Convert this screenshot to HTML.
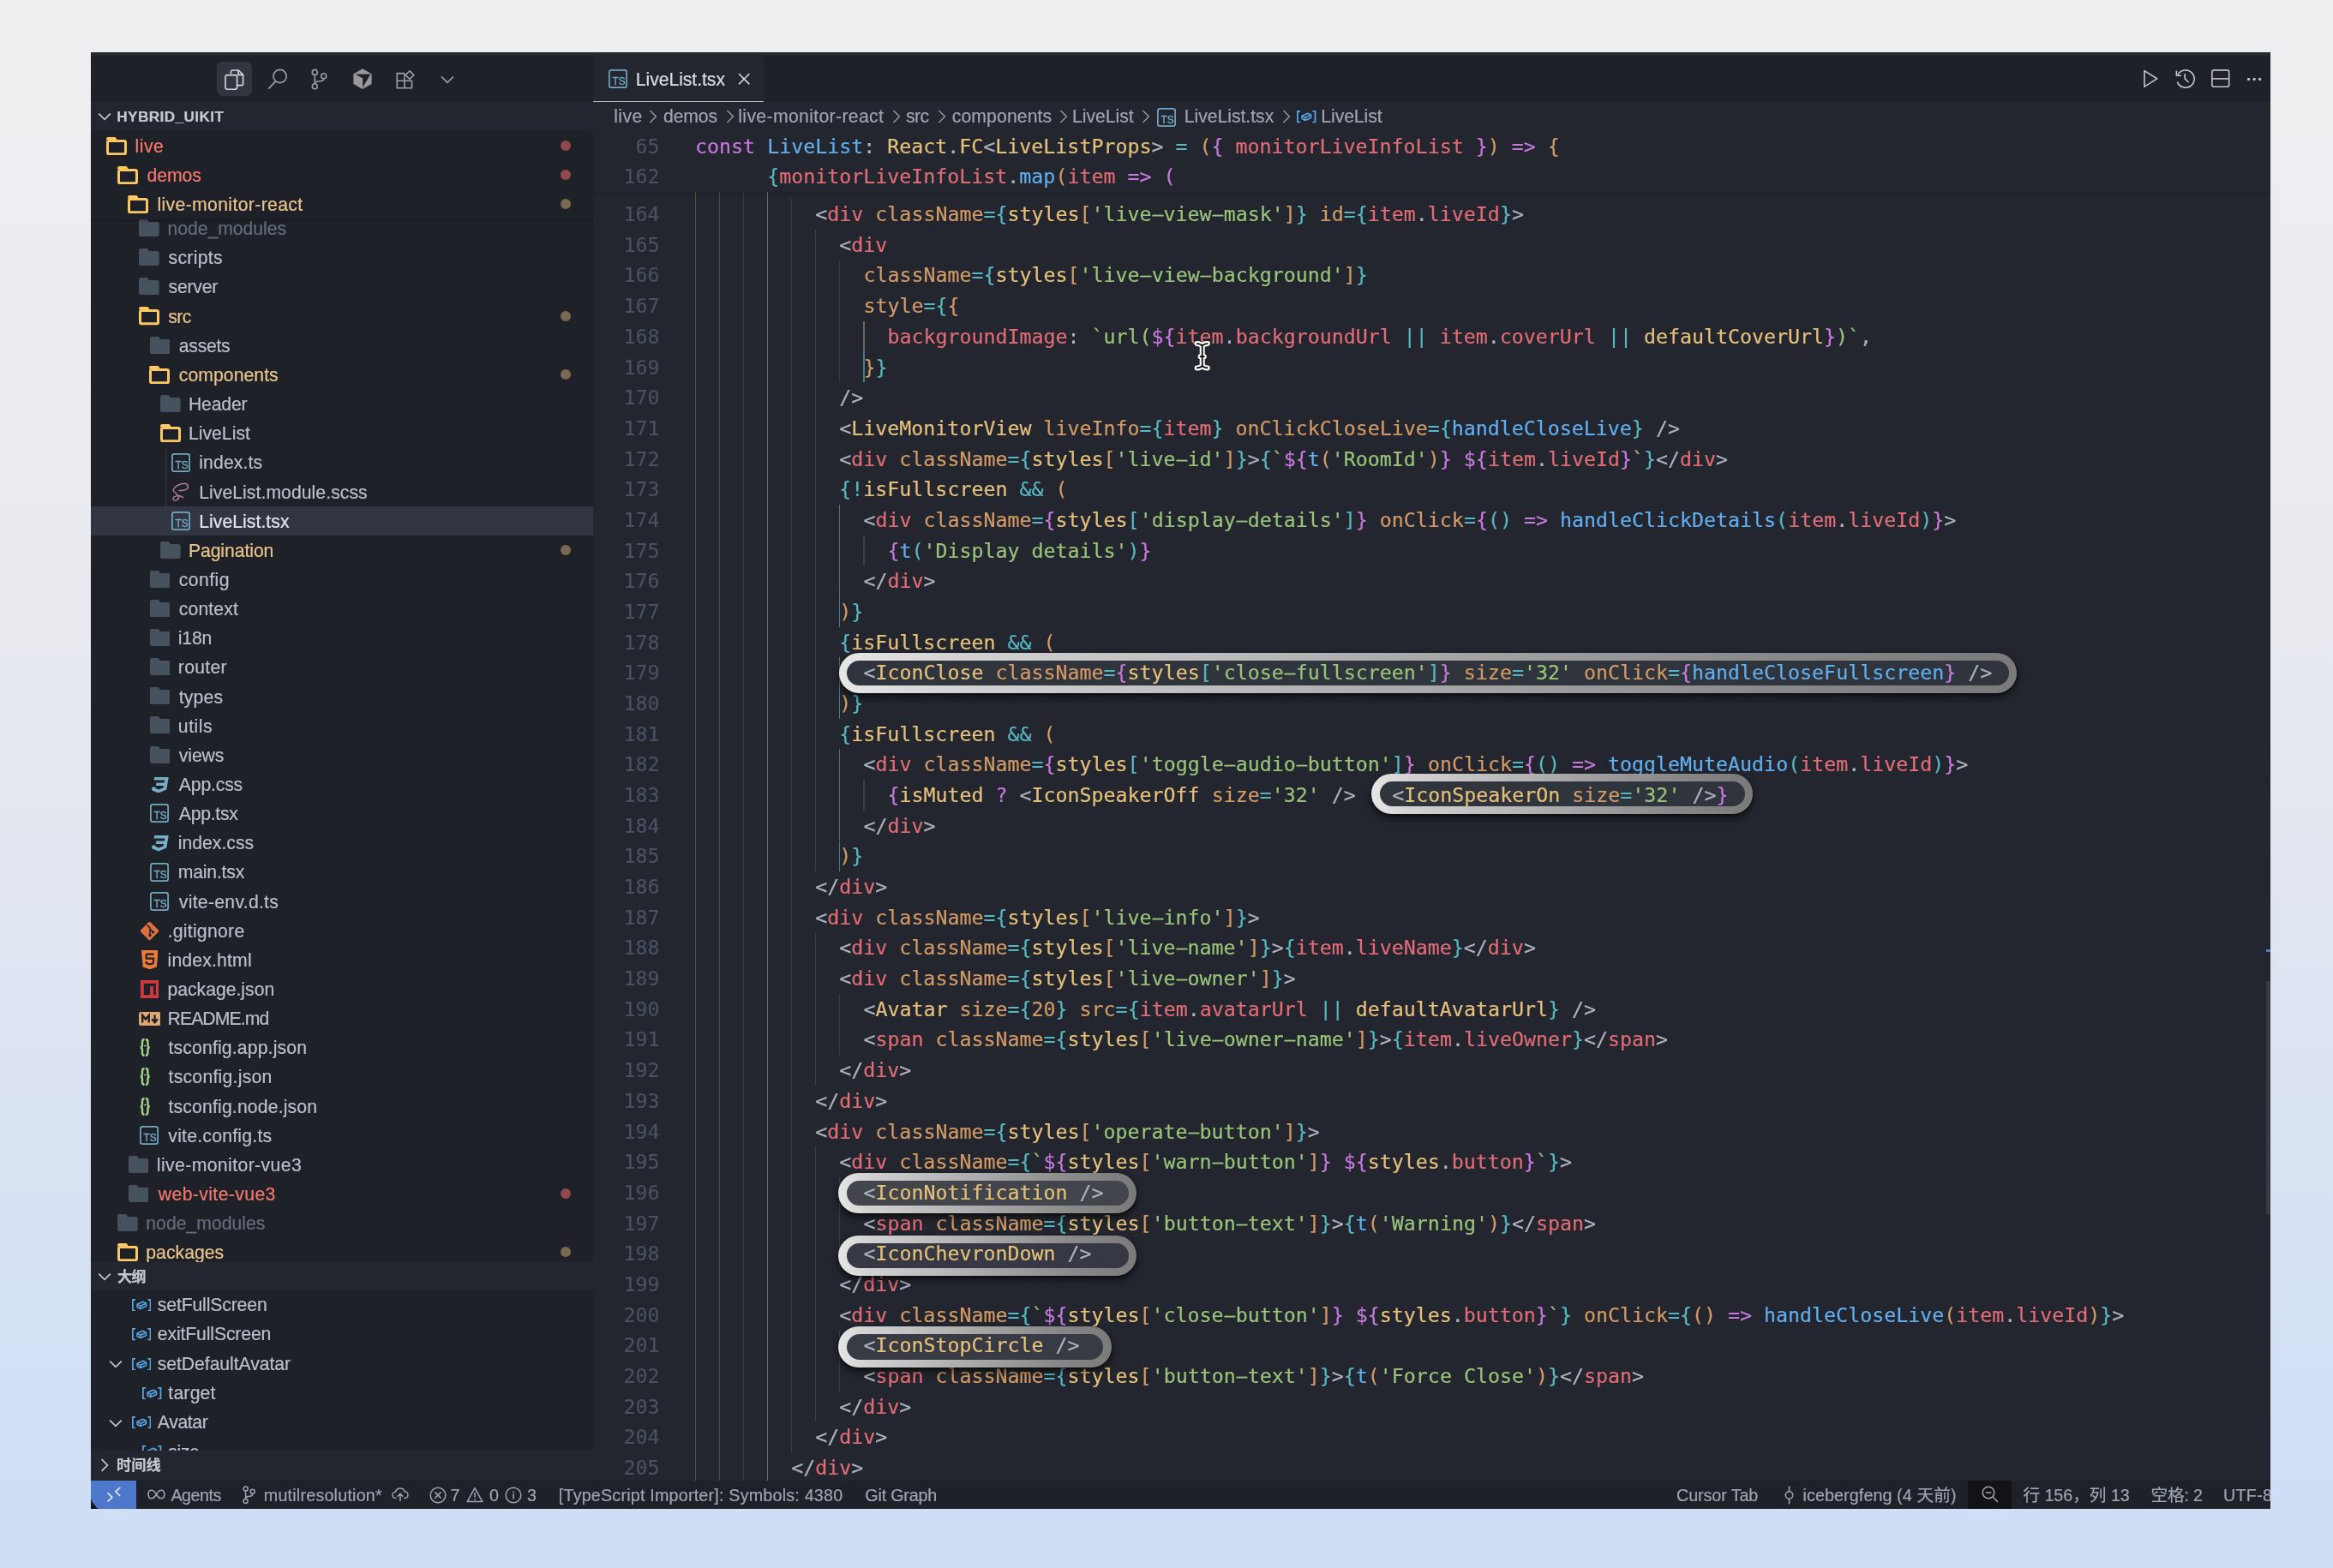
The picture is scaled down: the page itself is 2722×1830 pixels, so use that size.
<!DOCTYPE html>
<html lang="zh"><head><meta charset="utf-8"><title>LiveList.tsx</title>
<style>
html,body{margin:0;padding:0}
body{width:2722px;height:1830px;overflow:hidden;position:relative;
 background:linear-gradient(180deg,#edeef0 0%,#ebecef 30%,#e3e7f0 52%,#d9e2f2 72%,#d1dff5 90%,#cfdef5 100%);
 font-family:"Liberation Sans","Noto Sans CJK SC",sans-serif;}
#win{position:absolute;left:0;top:0;width:2722px;height:1830px;
 clip-path:inset(61.4px 73px 69.3px 106px);will-change:transform;}
#win div,#win span,#win svg{position:absolute}
.abs{position:absolute}
.ui{-webkit-text-stroke:.22px;font-size:21.2px;line-height:34px;height:34px;white-space:nowrap;color:#c3c8d2}
.code{-webkit-text-stroke:.2px;font-family:"DejaVu Sans Mono","Liberation Mono",monospace;font-size:23.287px;line-height:35.68px;height:35.68px;white-space:pre;color:#abb2bf}
#win .code span{position:static}
#win .code span.h{display:inline-block;transform:scale(2.1,.72)}
.ln{-webkit-text-stroke:.2px;font-family:"DejaVu Sans Mono","Liberation Mono",monospace;font-size:23.287px;line-height:35.68px;height:35.68px;width:70px;text-align:right;color:#495162;white-space:pre}
.p{color:#c678dd}.r{color:#e06c75}.g{color:#98c379}.y{color:#e5c07b}.b{color:#61afef}.c{color:#56b6c2}.o{color:#d19a66}.f{color:#abb2bf}
.st{-webkit-text-stroke:.2px;font-size:19.7px;line-height:33px;height:33px;top:1728.5px;white-space:nowrap;color:#9da5b4}
.bc{-webkit-text-stroke:.2px;font-size:21.2px;line-height:34px;height:34px;top:118.7px;white-space:nowrap;color:#9da5b4}
.gd{width:1.5px}
.pill{border-radius:24px;background:linear-gradient(90deg,#e6e6e6 0%,#d2d2d2 10%,#bcbcbc 32%,#a2a2a2 55%,#888 80%,#7a7a7a 100%);box-shadow:0 5px 9px rgba(0,0,0,.55),0 1px 3px rgba(0,0,0,.5)}
.pill i{position:absolute;left:9.3px;top:8.8px;right:9.3px;bottom:8.8px;border-radius:15px;background:#30343d;display:block}
</style></head><body>
<div id="win">
<div style="left:106.0px;top:61.4px;width:2543.0px;height:1700.3px;background:#1e2127;"></div><div style="left:692.0px;top:119.0px;width:1957.0px;height:1608.6px;background:#23262e;"></div><div style="left:106.0px;top:61.4px;width:2543.0px;height:3.2px;background:#24282f;"></div><div style="left:692.0px;top:64.6px;width:199.0px;height:54.4px;background:#23262e;"></div><div style="left:692.0px;top:118.3px;width:199.0px;height:1.0px;background:#b9bcc2;"></div><div style="left:253px;top:72.2px;width:41px;height:40.2px;border-radius:6.5px;background:#30353f"></div><svg style="left:262.0px;top:80.6px" width="23" height="24.4" viewBox="0 0 23 24.4" ><path d="M7.4 5.2V3.2Q7.4 1 9.6 1H16.2L21.6 6.2V16.4Q21.6 18.6 19.4 18.6H14.6M16 1.2V6.4H21.4" fill="none" stroke="#d7dae0" stroke-width="1.6" stroke-linejoin="round"/><rect x="1" y="6.6" width="13.6" height="16.6" rx="2.2" fill="none" stroke="#d7dae0" stroke-width="1.6"/></svg><svg style="left:311.6px;top:80.0px" width="24" height="25" viewBox="0 0 24 25" ><circle cx="14.6" cy="9" r="7.6" fill="none" stroke="#9b9ea4" stroke-width="1.6"/><path d="M9.6 14.8L1.2 23.6" stroke="#9b9ea4" stroke-width="1.7"/></svg><svg style="left:362.4px;top:80.0px" width="22" height="25.4" viewBox="0 0 22 25.4" ><circle cx="5.3" cy="4.4" r="3" fill="none" stroke="#9b9ea4" stroke-width="1.6"/><circle cx="5.3" cy="20.8" r="3" fill="none" stroke="#9b9ea4" stroke-width="1.6"/><circle cx="15.7" cy="8.8" r="3" fill="none" stroke="#9b9ea4" stroke-width="1.6"/><path d="M5.3 7.4V17.8M15.7 11.8Q15.7 14.6 11.6 14.8Q5.3 15 5.3 17.8" fill="none" stroke="#9b9ea4" stroke-width="1.6"/></svg><svg style="left:411.6px;top:80.2px" width="22" height="24.4" viewBox="0 0 22 24.4" ><path d="M11 0.3L21.6 6.3V18.1L11 24.1L0.4 18.1V6.3Z" fill="#9a9a9a"/><path d="M2.2 6.6H20.4L11 22.6L11 11.6Z" fill="#1e2127"/><path d="M2.2 6.6L11 11.6V22.4" fill="none" stroke="#9a9a9a" stroke-width=".4"/></svg><svg style="left:461.6px;top:81.6px" width="22.4" height="22" viewBox="0 0 22.4 22" ><path d="M10 3.6H1.2V20.8H18.6V12M1.2 12.2H18.6M10 3.6V20.8" fill="none" stroke="#9b9ea4" stroke-width="1.6"/><rect x="12.6" y="2.2" width="6.8" height="6.8" transform="rotate(45 16 5.6)" fill="none" stroke="#9b9ea4" stroke-width="1.6"/></svg><svg style="left:513.6px;top:88.4px" width="16" height="10" viewBox="0 0 16 10" ><path d="M1 1.4L8 8.4L15 1.4" fill="none" stroke="#9b9ea4" stroke-width="1.6"/></svg><div style="left:106.0px;top:591.0px;width:586.0px;height:34.3px;background:#313642;"></div><div style="left:192.6px;top:522.8px;width:1.4px;height:102.5px;background:#353b46;"></div><svg style="left:162.2px;top:255.9px" width="23.6" height="20" viewBox="0 0 23.6 20" ><path d="M0 2.2Q0 0 2.2 0H8.8Q10.2 0 10.9 1.3L11.7 3H21.4Q23.6 3 23.6 5.2V17.8Q23.6 20 21.4 20H2.2Q0 20 0 17.8Z" fill="#47525f"/></svg><div class="ui" style="left:195.5px;top:250.1px;letter-spacing:-0.037px;color:#636d7d">node_modules</div><svg style="left:162.2px;top:290.0px" width="23.6" height="20" viewBox="0 0 23.6 20" ><path d="M0 2.2Q0 0 2.2 0H8.8Q10.2 0 10.9 1.3L11.7 3H21.4Q23.6 3 23.6 5.2V17.8Q23.6 20 21.4 20H2.2Q0 20 0 17.8Z" fill="#47525f"/></svg><div class="ui" style="left:196.5px;top:284.3px;letter-spacing:0.313px;color:#b9bfcb">scripts</div><svg style="left:162.2px;top:324.2px" width="23.6" height="20" viewBox="0 0 23.6 20" ><path d="M0 2.2Q0 0 2.2 0H8.8Q10.2 0 10.9 1.3L11.7 3H21.4Q23.6 3 23.6 5.2V17.8Q23.6 20 21.4 20H2.2Q0 20 0 17.8Z" fill="#47525f"/></svg><div class="ui" style="left:196.5px;top:318.4px;letter-spacing:-0.202px;color:#b9bfcb">server</div><svg style="left:161.6px;top:358.2px" width="24" height="21.4" viewBox="0 0 24 21.4" ><path d="M0 2.2Q0 0 2.2 0H9.6Q11 0 11.7 1.4L12.6 3.4H0Z" fill="#fcc862"/><rect x="1.5" y="4.6" width="21" height="15.2" rx="1.6" fill="none" stroke="#fcc862" stroke-width="3"/></svg><div class="ui" style="left:196.2px;top:352.6px;letter-spacing:-0.525px;color:#e8c48c">src</div><div style="left:653.8px;top:362.7px;width:12px;height:12px;border-radius:50%;background:#7a6850"></div><svg style="left:174.7px;top:392.5px" width="23.6" height="20" viewBox="0 0 23.6 20" ><path d="M0 2.2Q0 0 2.2 0H8.8Q10.2 0 10.9 1.3L11.7 3H21.4Q23.6 3 23.6 5.2V17.8Q23.6 20 21.4 20H2.2Q0 20 0 17.8Z" fill="#47525f"/></svg><div class="ui" style="left:208.8px;top:386.7px;letter-spacing:-0.268px;color:#b9bfcb">assets</div><svg style="left:174.1px;top:426.5px" width="24" height="21.4" viewBox="0 0 24 21.4" ><path d="M0 2.2Q0 0 2.2 0H9.6Q11 0 11.7 1.4L12.6 3.4H0Z" fill="#fcc862"/><rect x="1.5" y="4.6" width="21" height="15.2" rx="1.6" fill="none" stroke="#fcc862" stroke-width="3"/></svg><div class="ui" style="left:208.8px;top:420.9px;letter-spacing:0.052px;color:#e8c48c">components</div><div style="left:653.8px;top:431.0px;width:12px;height:12px;border-radius:50%;background:#7a6850"></div><svg style="left:187.2px;top:460.8px" width="23.6" height="20" viewBox="0 0 23.6 20" ><path d="M0 2.2Q0 0 2.2 0H8.8Q10.2 0 10.9 1.3L11.7 3H21.4Q23.6 3 23.6 5.2V17.8Q23.6 20 21.4 20H2.2Q0 20 0 17.8Z" fill="#47525f"/></svg><div class="ui" style="left:219.9px;top:455.0px;letter-spacing:-0.147px;color:#b9bfcb">Header</div><svg style="left:186.6px;top:494.8px" width="24" height="21.4" viewBox="0 0 24 21.4" ><path d="M0 2.2Q0 0 2.2 0H9.6Q11 0 11.7 1.4L12.6 3.4H0Z" fill="#fcc862"/><rect x="1.5" y="4.6" width="21" height="15.2" rx="1.6" fill="none" stroke="#fcc862" stroke-width="3"/></svg><div class="ui" style="left:219.9px;top:489.2px;letter-spacing:0.021px;color:#b9bfcb">LiveList</div><svg style="left:200.2px;top:528.5px" width="22" height="22" viewBox="0 0 22 22" ><rect x="0.9" y="0.9" width="20.2" height="20.2" rx="2.4" fill="none" stroke="#74a9c4" stroke-width="1.7"/><text x="4.6" y="18.4" font-family="Liberation Sans,sans-serif" font-size="12.2" fill="#74a9c4" stroke="#74a9c4" stroke-width=".35" textLength="15.2" lengthAdjust="spacingAndGlyphs">TS</text></svg><div class="ui" style="left:232.2px;top:523.3px;letter-spacing:0.139px;color:#b9bfcb">index.ts</div><svg style="left:199.8px;top:563.3px" width="21" height="23" viewBox="0 0 21 23" ><path d="M19.3 4.2C18 -0.8 6.5 1.2 2.6 8C0.4 12.6 8 12.6 8.6 16.4C9.2 20.4 3 22.8 2 19.4C1.4 16.4 8.4 13.6 13.6 17.6M19.3 4.2C20.4 7.6 14.4 10.2 9 9.4" fill="none" stroke="#b47ba6" stroke-width="1.5" stroke-linecap="round"/></svg><div class="ui" style="left:232.2px;top:557.5px;letter-spacing:0.053px;color:#b9bfcb">LiveList.module.scss</div><svg style="left:200.2px;top:596.8px" width="22" height="22" viewBox="0 0 22 22" ><rect x="0.9" y="0.9" width="20.2" height="20.2" rx="2.4" fill="none" stroke="#74a9c4" stroke-width="1.7"/><text x="4.6" y="18.4" font-family="Liberation Sans,sans-serif" font-size="12.2" fill="#74a9c4" stroke="#74a9c4" stroke-width=".35" textLength="15.2" lengthAdjust="spacingAndGlyphs">TS</text></svg><div class="ui" style="left:232.2px;top:591.6px;letter-spacing:0.045px;color:#e3e6ec">LiveList.tsx</div><svg style="left:187.2px;top:631.5px" width="23.6" height="20" viewBox="0 0 23.6 20" ><path d="M0 2.2Q0 0 2.2 0H8.8Q10.2 0 10.9 1.3L11.7 3H21.4Q23.6 3 23.6 5.2V17.8Q23.6 20 21.4 20H2.2Q0 20 0 17.8Z" fill="#47525f"/></svg><div class="ui" style="left:219.9px;top:625.8px;letter-spacing:-0.072px;color:#e8c48c">Pagination</div><div style="left:653.8px;top:635.9px;width:12px;height:12px;border-radius:50%;background:#7a6850"></div><svg style="left:174.7px;top:665.7px" width="23.6" height="20" viewBox="0 0 23.6 20" ><path d="M0 2.2Q0 0 2.2 0H8.8Q10.2 0 10.9 1.3L11.7 3H21.4Q23.6 3 23.6 5.2V17.8Q23.6 20 21.4 20H2.2Q0 20 0 17.8Z" fill="#47525f"/></svg><div class="ui" style="left:208.8px;top:659.9px;letter-spacing:0.429px;color:#b9bfcb">config</div><svg style="left:174.7px;top:699.8px" width="23.6" height="20" viewBox="0 0 23.6 20" ><path d="M0 2.2Q0 0 2.2 0H8.8Q10.2 0 10.9 1.3L11.7 3H21.4Q23.6 3 23.6 5.2V17.8Q23.6 20 21.4 20H2.2Q0 20 0 17.8Z" fill="#47525f"/></svg><div class="ui" style="left:208.8px;top:694.1px;letter-spacing:0.129px;color:#b9bfcb">context</div><svg style="left:174.7px;top:734.0px" width="23.6" height="20" viewBox="0 0 23.6 20" ><path d="M0 2.2Q0 0 2.2 0H8.8Q10.2 0 10.9 1.3L11.7 3H21.4Q23.6 3 23.6 5.2V17.8Q23.6 20 21.4 20H2.2Q0 20 0 17.8Z" fill="#47525f"/></svg><div class="ui" style="left:207.8px;top:728.2px;letter-spacing:-0.158px;color:#b9bfcb">i18n</div><svg style="left:174.7px;top:768.1px" width="23.6" height="20" viewBox="0 0 23.6 20" ><path d="M0 2.2Q0 0 2.2 0H8.8Q10.2 0 10.9 1.3L11.7 3H21.4Q23.6 3 23.6 5.2V17.8Q23.6 20 21.4 20H2.2Q0 20 0 17.8Z" fill="#47525f"/></svg><div class="ui" style="left:207.8px;top:762.4px;letter-spacing:0.301px;color:#b9bfcb">router</div><svg style="left:174.7px;top:802.3px" width="23.6" height="20" viewBox="0 0 23.6 20" ><path d="M0 2.2Q0 0 2.2 0H8.8Q10.2 0 10.9 1.3L11.7 3H21.4Q23.6 3 23.6 5.2V17.8Q23.6 20 21.4 20H2.2Q0 20 0 17.8Z" fill="#47525f"/></svg><div class="ui" style="left:208.8px;top:796.5px;letter-spacing:0.163px;color:#b9bfcb">types</div><svg style="left:174.7px;top:836.4px" width="23.6" height="20" viewBox="0 0 23.6 20" ><path d="M0 2.2Q0 0 2.2 0H8.8Q10.2 0 10.9 1.3L11.7 3H21.4Q23.6 3 23.6 5.2V17.8Q23.6 20 21.4 20H2.2Q0 20 0 17.8Z" fill="#47525f"/></svg><div class="ui" style="left:207.8px;top:830.7px;letter-spacing:0.554px;color:#b9bfcb">utils</div><svg style="left:174.7px;top:870.6px" width="23.6" height="20" viewBox="0 0 23.6 20" ><path d="M0 2.2Q0 0 2.2 0H8.8Q10.2 0 10.9 1.3L11.7 3H21.4Q23.6 3 23.6 5.2V17.8Q23.6 20 21.4 20H2.2Q0 20 0 17.8Z" fill="#47525f"/></svg><div class="ui" style="left:208.8px;top:864.8px;letter-spacing:-0.096px;color:#b9bfcb">views</div><svg style="left:176.7px;top:906.7px" width="20" height="18.6" viewBox="0 0 20 18.6" ><path d="M3.2 0H19.8L17.2 14.6L8 18.6L0 15.2L0.6 11.4L4.4 11.4L4.2 12.8L8.2 14.6L13.6 12.6L14.2 10H4.8L5.4 6.6H14.8L15.3 3.6H2.6Z" fill="#78adc8"/></svg><div class="ui" style="left:208.8px;top:899.0px;letter-spacing:-0.162px;color:#b9bfcb">App.css</div><svg style="left:175.3px;top:938.3px" width="22" height="22" viewBox="0 0 22 22" ><rect x="0.9" y="0.9" width="20.2" height="20.2" rx="2.4" fill="none" stroke="#74a9c4" stroke-width="1.7"/><text x="4.6" y="18.4" font-family="Liberation Sans,sans-serif" font-size="12.2" fill="#74a9c4" stroke="#74a9c4" stroke-width=".35" textLength="15.2" lengthAdjust="spacingAndGlyphs">TS</text></svg><div class="ui" style="left:208.8px;top:933.1px;letter-spacing:-0.278px;color:#b9bfcb">App.tsx</div><svg style="left:176.7px;top:975.0px" width="20" height="18.6" viewBox="0 0 20 18.6" ><path d="M3.2 0H19.8L17.2 14.6L8 18.6L0 15.2L0.6 11.4L4.4 11.4L4.2 12.8L8.2 14.6L13.6 12.6L14.2 10H4.8L5.4 6.6H14.8L15.3 3.6H2.6Z" fill="#78adc8"/></svg><div class="ui" style="left:207.8px;top:967.3px;letter-spacing:-0.003px;color:#b9bfcb">index.css</div><svg style="left:175.3px;top:1006.6px" width="22" height="22" viewBox="0 0 22 22" ><rect x="0.9" y="0.9" width="20.2" height="20.2" rx="2.4" fill="none" stroke="#74a9c4" stroke-width="1.7"/><text x="4.6" y="18.4" font-family="Liberation Sans,sans-serif" font-size="12.2" fill="#74a9c4" stroke="#74a9c4" stroke-width=".35" textLength="15.2" lengthAdjust="spacingAndGlyphs">TS</text></svg><div class="ui" style="left:207.8px;top:1001.4px;letter-spacing:-0.199px;color:#b9bfcb">main.tsx</div><svg style="left:175.3px;top:1040.8px" width="22" height="22" viewBox="0 0 22 22" ><rect x="0.9" y="0.9" width="20.2" height="20.2" rx="2.4" fill="none" stroke="#74a9c4" stroke-width="1.7"/><text x="4.6" y="18.4" font-family="Liberation Sans,sans-serif" font-size="12.2" fill="#74a9c4" stroke="#74a9c4" stroke-width=".35" textLength="15.2" lengthAdjust="spacingAndGlyphs">TS</text></svg><div class="ui" style="left:208.8px;top:1035.6px;letter-spacing:0.287px;color:#b9bfcb">vite-env.d.ts</div><svg style="left:162.7px;top:1075.1px" width="23" height="23" viewBox="0 0 23 23" ><rect x="3.5" y="3.5" width="16" height="16" rx="1.6" transform="rotate(45 11.5 11.5)" fill="#dd7040"/><path d="M8.6 4.6L12 8V16.2M12 9.4L15.4 12.6" stroke="#1e2127" stroke-width="1.5" fill="none"/><circle cx="12" cy="16.6" r="1.7" fill="#1e2127"/><circle cx="15.6" cy="12.8" r="1.6" fill="#1e2127"/></svg><div class="ui" style="left:195.5px;top:1069.7px;letter-spacing:0.280px;color:#b9bfcb">.gitignore</div><svg style="left:164.6px;top:1108.8px" width="19.6" height="22.4" viewBox="0 0 19.6 22.4" ><path d="M0 0H19.6L17.9 19.4L9.8 22.4L1.7 19.4Z" fill="#ee7a3b"/><path d="M5.2 4.6H14.6M5.4 4.6L5.8 9.6H14.2L13.8 15.2L9.8 16.6L5.8 15.2L5.6 13" fill="none" stroke="#1e2127" stroke-width="2.1"/></svg><div class="ui" style="left:195.5px;top:1103.8px;letter-spacing:0.171px;color:#b9bfcb">index.html</div><svg style="left:163.6px;top:1144.1px" width="21.6" height="21" viewBox="0 0 21.6 21" ><rect x="1.9" y="1.9" width="17.8" height="17.2" fill="none" stroke="#d03a3c" stroke-width="3.8"/><rect x="11.2" y="7" width="3.8" height="12" fill="#d03a3c"/></svg><div class="ui" style="left:195.5px;top:1138.0px;letter-spacing:-0.016px;color:#b9bfcb">package.json</div><svg style="left:161.6px;top:1180.9px" width="25.4" height="16" viewBox="0 0 25.4 16" ><rect x="0" y="0" width="25.4" height="16" rx="2.2" fill="#e0a770"/><path d="M4.2 12.4V4L8 8.6L11.8 4V12.4" fill="none" stroke="#1e2127" stroke-width="2.3"/><path d="M18.6 3.6V10.6M15.2 8.2L18.6 12.2L22 8.2" fill="none" stroke="#1e2127" stroke-width="2.3"/></svg><div class="ui" style="left:195.5px;top:1172.1px;letter-spacing:-0.898px;color:#b9bfcb">README.md</div><svg style="left:162.6px;top:1212.2px" width="12.4" height="21" viewBox="0 0 12.4 21" ><path d="M5.6 1C3.2 1 3 2.4 3 4.4V7.6C3 9.4 2.4 10.2 1 10.5C2.4 10.8 3 11.6 3 13.4V16.6C3 18.6 3.2 20 5.6 20" fill="none" stroke="#a2d384" stroke-width="2.4"/><path d="M6.8 1C9.2 1 9.4 2.4 9.4 4.4V7.6C9.4 9.4 10 10.2 11.4 10.5C10 10.8 9.4 11.6 9.4 13.4V16.6C9.4 18.6 9.2 20 6.8 20" fill="none" stroke="#a2d384" stroke-width="2.4"/><circle cx="6.2" cy="8.6" r="0.9" fill="#e6f2dc"/></svg><div class="ui" style="left:196.5px;top:1206.3px;letter-spacing:0.155px;color:#b9bfcb">tsconfig.app.json</div><svg style="left:162.6px;top:1246.3px" width="12.4" height="21" viewBox="0 0 12.4 21" ><path d="M5.6 1C3.2 1 3 2.4 3 4.4V7.6C3 9.4 2.4 10.2 1 10.5C2.4 10.8 3 11.6 3 13.4V16.6C3 18.6 3.2 20 5.6 20" fill="none" stroke="#a2d384" stroke-width="2.4"/><path d="M6.8 1C9.2 1 9.4 2.4 9.4 4.4V7.6C9.4 9.4 10 10.2 11.4 10.5C10 10.8 9.4 11.6 9.4 13.4V16.6C9.4 18.6 9.2 20 6.8 20" fill="none" stroke="#a2d384" stroke-width="2.4"/><circle cx="6.2" cy="8.6" r="0.9" fill="#e6f2dc"/></svg><div class="ui" style="left:196.5px;top:1240.4px;letter-spacing:0.259px;color:#b9bfcb">tsconfig.json</div><svg style="left:162.6px;top:1280.5px" width="12.4" height="21" viewBox="0 0 12.4 21" ><path d="M5.6 1C3.2 1 3 2.4 3 4.4V7.6C3 9.4 2.4 10.2 1 10.5C2.4 10.8 3 11.6 3 13.4V16.6C3 18.6 3.2 20 5.6 20" fill="none" stroke="#a2d384" stroke-width="2.4"/><path d="M6.8 1C9.2 1 9.4 2.4 9.4 4.4V7.6C9.4 9.4 10 10.2 11.4 10.5C10 10.8 9.4 11.6 9.4 13.4V16.6C9.4 18.6 9.2 20 6.8 20" fill="none" stroke="#a2d384" stroke-width="2.4"/><circle cx="6.2" cy="8.6" r="0.9" fill="#e6f2dc"/></svg><div class="ui" style="left:196.5px;top:1274.6px;letter-spacing:0.164px;color:#b9bfcb">tsconfig.node.json</div><svg style="left:162.8px;top:1313.9px" width="22" height="22" viewBox="0 0 22 22" ><rect x="0.9" y="0.9" width="20.2" height="20.2" rx="2.4" fill="none" stroke="#74a9c4" stroke-width="1.7"/><text x="4.6" y="18.4" font-family="Liberation Sans,sans-serif" font-size="12.2" fill="#74a9c4" stroke="#74a9c4" stroke-width=".35" textLength="15.2" lengthAdjust="spacingAndGlyphs">TS</text></svg><div class="ui" style="left:196.3px;top:1308.7px;letter-spacing:0.241px;color:#b9bfcb">vite.config.ts</div><svg style="left:149.8px;top:1348.6px" width="23.6" height="20" viewBox="0 0 23.6 20" ><path d="M0 2.2Q0 0 2.2 0H8.8Q10.2 0 10.9 1.3L11.7 3H21.4Q23.6 3 23.6 5.2V17.8Q23.6 20 21.4 20H2.2Q0 20 0 17.8Z" fill="#47525f"/></svg><div class="ui" style="left:182.8px;top:1342.9px;letter-spacing:0.399px;color:#b9bfcb">live-monitor-vue3</div><svg style="left:149.8px;top:1382.8px" width="23.6" height="20" viewBox="0 0 23.6 20" ><path d="M0 2.2Q0 0 2.2 0H8.8Q10.2 0 10.9 1.3L11.7 3H21.4Q23.6 3 23.6 5.2V17.8Q23.6 20 21.4 20H2.2Q0 20 0 17.8Z" fill="#47525f"/></svg><div class="ui" style="left:184.8px;top:1377.0px;letter-spacing:0.391px;color:#f5786c">web-vite-vue3</div><div style="left:653.8px;top:1387.1px;width:12px;height:12px;border-radius:50%;background:#91494a"></div><svg style="left:137.3px;top:1416.9px" width="23.6" height="20" viewBox="0 0 23.6 20" ><path d="M0 2.2Q0 0 2.2 0H8.8Q10.2 0 10.9 1.3L11.7 3H21.4Q23.6 3 23.6 5.2V17.8Q23.6 20 21.4 20H2.2Q0 20 0 17.8Z" fill="#47525f"/></svg><div class="ui" style="left:170.3px;top:1411.2px;letter-spacing:0.008px;color:#636d7d">node_modules</div><svg style="left:136.8px;top:1451.0px" width="24" height="21.4" viewBox="0 0 24 21.4" ><path d="M0 2.2Q0 0 2.2 0H9.6Q11 0 11.7 1.4L12.6 3.4H0Z" fill="#fcc862"/><rect x="1.5" y="4.6" width="21" height="15.2" rx="1.6" fill="none" stroke="#fcc862" stroke-width="3"/></svg><div class="ui" style="left:170.3px;top:1445.3px;letter-spacing:0.028px;color:#e8c48c">packages</div><div style="left:653.8px;top:1455.4px;width:12px;height:12px;border-radius:50%;background:#7a6850"></div><div style="left:106.0px;top:153.4px;width:586.0px;height:102.2px;background:#1e2127;"></div><div style="left:106px;top:255.6px;width:586px;height:5px;background:linear-gradient(180deg,rgba(0,0,0,.2),rgba(0,0,0,0))"></div><svg style="left:124.3px;top:159.6px" width="24" height="21.4" viewBox="0 0 24 21.4" ><path d="M0 2.2Q0 0 2.2 0H9.6Q11 0 11.7 1.4L12.6 3.4H0Z" fill="#fcc862"/><rect x="1.5" y="4.6" width="21" height="15.2" rx="1.6" fill="none" stroke="#fcc862" stroke-width="3"/></svg><div class="ui" style="left:157.6px;top:153.9px;letter-spacing:0.464px;color:#f5786c">live</div><div style="left:653.8px;top:164.0px;width:12px;height:12px;border-radius:50%;background:#91494a"></div><svg style="left:136.8px;top:193.7px" width="24" height="21.4" viewBox="0 0 24 21.4" ><path d="M0 2.2Q0 0 2.2 0H9.6Q11 0 11.7 1.4L12.6 3.4H0Z" fill="#fcc862"/><rect x="1.5" y="4.6" width="21" height="15.2" rx="1.6" fill="none" stroke="#fcc862" stroke-width="3"/></svg><div class="ui" style="left:171.5px;top:188.1px;letter-spacing:-0.050px;color:#f5786c">demos</div><div style="left:653.8px;top:198.2px;width:12px;height:12px;border-radius:50%;background:#91494a"></div><svg style="left:149.2px;top:227.8px" width="24" height="21.4" viewBox="0 0 24 21.4" ><path d="M0 2.2Q0 0 2.2 0H9.6Q11 0 11.7 1.4L12.6 3.4H0Z" fill="#fcc862"/><rect x="1.5" y="4.6" width="21" height="15.2" rx="1.6" fill="none" stroke="#fcc862" stroke-width="3"/></svg><div class="ui" style="left:183.4px;top:222.2px;letter-spacing:0.361px;color:#e8c48c">live-monitor-react</div><div style="left:653.8px;top:232.3px;width:12px;height:12px;border-radius:50%;background:#7a6850"></div><div style="left:106.0px;top:119.0px;width:586.0px;height:34.4px;background:#23262e;"></div><svg style="left:113.6px;top:131.4px" width="16" height="10" viewBox="0 0 16 10" ><path d="M1.2 1.6L8 8.4L14.8 1.6" fill="none" stroke="#c5c9d2" stroke-width="1.7"/></svg><div class="ui" style="left:136.3px;top:119.4px;font-size:17.2px;font-weight:bold;letter-spacing:0.398px;color:#c3c8d2">HYBRID_UIKIT</div><div style="left:106.0px;top:1473.0px;width:586.0px;height:254.6px;background:#1e2127;"></div><div style="left:106.0px;top:1473.1px;width:586.0px;height:33.2px;background:#23262e;"></div><svg style="left:113.6px;top:1484.8px" width="16" height="10" viewBox="0 0 16 10" ><path d="M1.2 1.6L8 8.4L14.8 1.6" fill="none" stroke="#c5c9d2" stroke-width="1.7"/></svg><div class="ui" style="left:136.9px;top:1472.6px;font-size:17.2px;font-weight:bold;letter-spacing:-0.788px;color:#c3c8d2">大纲</div><svg style="left:153.8px;top:1515.9px" width="22.4" height="14.4" viewBox="0 0 22.4 14.4" ><path d="M4 .9H.9V13.5H4M18.4 .9H21.5V13.5H18.4" fill="none" stroke="#5aa9e6" stroke-width="1.7"/><path d="M6 6.2L12.8 3.2L16.6 5.2V8.6L9.8 11.6L6 9.6ZM6 6.2L9.8 8.2L16.6 5.2M9.8 8.2V11.6" fill="#5aa9e6" fill-opacity=".25" stroke="#5aa9e6" stroke-width="1.4" stroke-linejoin="round"/></svg><div class="ui" style="left:183.8px;top:1506.0px;letter-spacing:-0.138px;color:#b9bfcb">setFullScreen</div><svg style="left:153.8px;top:1550.2px" width="22.4" height="14.4" viewBox="0 0 22.4 14.4" ><path d="M4 .9H.9V13.5H4M18.4 .9H21.5V13.5H18.4" fill="none" stroke="#5aa9e6" stroke-width="1.7"/><path d="M6 6.2L12.8 3.2L16.6 5.2V8.6L9.8 11.6L6 9.6ZM6 6.2L9.8 8.2L16.6 5.2M9.8 8.2V11.6" fill="#5aa9e6" fill-opacity=".25" stroke="#5aa9e6" stroke-width="1.4" stroke-linejoin="round"/></svg><div class="ui" style="left:183.8px;top:1540.3px;letter-spacing:-0.128px;color:#b9bfcb">exitFullScreen</div><svg style="left:127.4px;top:1587.1px" width="16" height="10" viewBox="0 0 16 10" ><path d="M1.2 1.6L8 8.4L14.8 1.6" fill="none" stroke="#c5c9d2" stroke-width="1.7"/></svg><svg style="left:153.8px;top:1584.5px" width="22.4" height="14.4" viewBox="0 0 22.4 14.4" ><path d="M4 .9H.9V13.5H4M18.4 .9H21.5V13.5H18.4" fill="none" stroke="#5aa9e6" stroke-width="1.7"/><path d="M6 6.2L12.8 3.2L16.6 5.2V8.6L9.8 11.6L6 9.6ZM6 6.2L9.8 8.2L16.6 5.2M9.8 8.2V11.6" fill="#5aa9e6" fill-opacity=".25" stroke="#5aa9e6" stroke-width="1.4" stroke-linejoin="round"/></svg><div class="ui" style="left:183.8px;top:1574.6px;letter-spacing:-0.066px;color:#b9bfcb">setDefaultAvatar</div><svg style="left:166.2px;top:1618.8px" width="22.4" height="14.4" viewBox="0 0 22.4 14.4" ><path d="M4 .9H.9V13.5H4M18.4 .9H21.5V13.5H18.4" fill="none" stroke="#5aa9e6" stroke-width="1.7"/><path d="M6 6.2L12.8 3.2L16.6 5.2V8.6L9.8 11.6L6 9.6ZM6 6.2L9.8 8.2L16.6 5.2M9.8 8.2V11.6" fill="#5aa9e6" fill-opacity=".25" stroke="#5aa9e6" stroke-width="1.4" stroke-linejoin="round"/></svg><div class="ui" style="left:196.3px;top:1608.9px;letter-spacing:0.201px;color:#b9bfcb">target</div><svg style="left:127.4px;top:1655.7px" width="16" height="10" viewBox="0 0 16 10" ><path d="M1.2 1.6L8 8.4L14.8 1.6" fill="none" stroke="#c5c9d2" stroke-width="1.7"/></svg><svg style="left:153.8px;top:1653.1px" width="22.4" height="14.4" viewBox="0 0 22.4 14.4" ><path d="M4 .9H.9V13.5H4M18.4 .9H21.5V13.5H18.4" fill="none" stroke="#5aa9e6" stroke-width="1.7"/><path d="M6 6.2L12.8 3.2L16.6 5.2V8.6L9.8 11.6L6 9.6ZM6 6.2L9.8 8.2L16.6 5.2M9.8 8.2V11.6" fill="#5aa9e6" fill-opacity=".25" stroke="#5aa9e6" stroke-width="1.4" stroke-linejoin="round"/></svg><div class="ui" style="left:183.8px;top:1643.2px;letter-spacing:-0.359px;color:#b9bfcb">Avatar</div><svg style="left:166.2px;top:1687.4px" width="22.4" height="14.4" viewBox="0 0 22.4 14.4" ><path d="M4 .9H.9V13.5H4M18.4 .9H21.5V13.5H18.4" fill="none" stroke="#5aa9e6" stroke-width="1.7"/><path d="M6 6.2L12.8 3.2L16.6 5.2V8.6L9.8 11.6L6 9.6ZM6 6.2L9.8 8.2L16.6 5.2M9.8 8.2V11.6" fill="#5aa9e6" fill-opacity=".25" stroke="#5aa9e6" stroke-width="1.4" stroke-linejoin="round"/></svg><div class="ui" style="left:196.3px;top:1677.5px;letter-spacing:-0.398px;color:#b9bfcb">size</div><div style="left:106.0px;top:1693.4px;width:586.0px;height:34.2px;background:#23262e;"></div><svg style="left:117.0px;top:1702.4px" width="10" height="16" viewBox="0 0 10 16" ><path d="M1.6 1.2L8.4 8L1.6 14.8" fill="none" stroke="#c5c9d2" stroke-width="1.7"/></svg><div class="ui" style="left:135.9px;top:1693.4px;font-size:17.2px;font-weight:bold;letter-spacing:0.112px;color:#c3c8d2">时间线</div><svg style="left:709.8px;top:81.3px" width="22" height="22" viewBox="0 0 22 22" ><rect x="0.9" y="0.9" width="20.2" height="20.2" rx="2.4" fill="none" stroke="#6fa6c2" stroke-width="1.7"/><text x="4.6" y="18.4" font-family="Liberation Sans,sans-serif" font-size="12.2" fill="#6fa6c2" stroke="#6fa6c2" stroke-width=".35" textLength="15.2" lengthAdjust="spacingAndGlyphs">TS</text></svg><div class="ui" style="left:741.8px;top:75.6px;letter-spacing:-0.055px;color:#d9dce2">LiveList.tsx</div><svg style="left:861.4px;top:85.4px" width="14.4" height="14.4" viewBox="0 0 14.4 14.4" ><path d="M1 1L13.4 13.4M13.4 1L1 13.4" stroke="#d0d3d9" stroke-width="1.6" fill="none"/></svg><svg style="left:2500.0px;top:81.4px" width="19" height="22" viewBox="0 0 19 22" ><path d="M2 1.6L16.6 10.8L2 20.2Z" fill="none" stroke="#c3c5c9" stroke-width="1.6" stroke-linejoin="round"/></svg><svg style="left:2537.0px;top:80.4px" width="25" height="24" viewBox="0 0 25 24" ><path d="M3.9 7.4A10.2 10.2 0 1 1 3.4 15.6" fill="none" stroke="#c3c5c9" stroke-width="1.6"/><path d="M2.4 2.6V8.2H8" fill="none" stroke="#c3c5c9" stroke-width="1.6"/><path d="M12.2 6V11.8L16.6 16" fill="none" stroke="#c3c5c9" stroke-width="1.6"/></svg><svg style="left:2580.0px;top:80.6px" width="22" height="21.4" viewBox="0 0 22 21.4" ><rect x="0.9" y="0.9" width="19.8" height="19.4" rx="2.2" fill="none" stroke="#c3c5c9" stroke-width="1.6"/><path d="M1 10.9H20.6" stroke="#c3c5c9" stroke-width="1.6"/></svg><svg style="left:2621.0px;top:89.6px" width="18" height="5" viewBox="0 0 18 5" ><circle cx="2.6" cy="2.4" r="1.7" fill="#c3c5c9"/><circle cx="9.1" cy="2.4" r="1.7" fill="#c3c5c9"/><circle cx="15.6" cy="2.4" r="1.7" fill="#c3c5c9"/></svg><div class="bc" style="left:716.2px;letter-spacing:0.464px;color:#9da5b4">live</div><svg style="left:756.5px;top:128.4px" width="10" height="16" viewBox="0 0 10 16" ><path d="M1.4 1L8.4 8L1.4 15" fill="none" stroke="#8f96a3" stroke-width="1.5"/></svg><div class="bc" style="left:774.0px;letter-spacing:-0.125px;color:#9da5b4">demos</div><svg style="left:846.5px;top:128.4px" width="10" height="16" viewBox="0 0 10 16" ><path d="M1.4 1L8.4 8L1.4 15" fill="none" stroke="#8f96a3" stroke-width="1.5"/></svg><div class="bc" style="left:861.3px;letter-spacing:0.349px;color:#9da5b4">live-monitor-react</div><svg style="left:1040.5px;top:128.4px" width="10" height="16" viewBox="0 0 10 16" ><path d="M1.4 1L8.4 8L1.4 15" fill="none" stroke="#8f96a3" stroke-width="1.5"/></svg><div class="bc" style="left:1057.0px;letter-spacing:-0.575px;color:#9da5b4">src</div><svg style="left:1093.5px;top:128.4px" width="10" height="16" viewBox="0 0 10 16" ><path d="M1.4 1L8.4 8L1.4 15" fill="none" stroke="#8f96a3" stroke-width="1.5"/></svg><div class="bc" style="left:1110.7px;letter-spacing:0.119px;color:#9da5b4">components</div><svg style="left:1235.5px;top:128.4px" width="10" height="16" viewBox="0 0 10 16" ><path d="M1.4 1L8.4 8L1.4 15" fill="none" stroke="#8f96a3" stroke-width="1.5"/></svg><div class="bc" style="left:1251.0px;letter-spacing:-0.022px;color:#9da5b4">LiveList</div><svg style="left:1331.5px;top:128.4px" width="10" height="16" viewBox="0 0 10 16" ><path d="M1.4 1L8.4 8L1.4 15" fill="none" stroke="#8f96a3" stroke-width="1.5"/></svg><svg style="left:1350.2px;top:125.7px" width="22" height="22" viewBox="0 0 22 22" ><rect x="0.9" y="0.9" width="20.2" height="20.2" rx="2.4" fill="none" stroke="#6fa6c2" stroke-width="1.7"/><text x="4.6" y="18.4" font-family="Liberation Sans,sans-serif" font-size="12.2" fill="#6fa6c2" stroke="#6fa6c2" stroke-width=".35" textLength="15.2" lengthAdjust="spacingAndGlyphs">TS</text></svg><div class="bc" style="left:1381.7px;letter-spacing:-0.019px;color:#9da5b4">LiveList.tsx</div><svg style="left:1495.5px;top:128.4px" width="10" height="16" viewBox="0 0 10 16" ><path d="M1.4 1L8.4 8L1.4 15" fill="none" stroke="#8f96a3" stroke-width="1.5"/></svg><svg style="left:1513.4px;top:129.4px" width="22.4" height="14.4" viewBox="0 0 22.4 14.4" ><path d="M4 .9H.9V13.5H4M18.4 .9H21.5V13.5H18.4" fill="none" stroke="#5aa9e6" stroke-width="1.7"/><path d="M6 6.2L12.8 3.2L16.6 5.2V8.6L9.8 11.6L6 9.6ZM6 6.2L9.8 8.2L16.6 5.2M9.8 8.2V11.6" fill="#5aa9e6" fill-opacity=".25" stroke="#5aa9e6" stroke-width="1.4" stroke-linejoin="round"/></svg><div class="bc" style="left:1541.3px;letter-spacing:-0.079px;color:#9da5b4">LiveList</div><div class="gd" style="left:810.9px;top:224.0px;height:1503.6px;background:#5f4e3d;width:1.35px"></div><div class="gd" style="left:839.0px;top:224.0px;height:1503.6px;background:#594066;width:1.35px"></div><div class="gd" style="left:867.0px;top:224.0px;height:1503.6px;background:#383d47;width:1.35px"></div><div class="gd" style="left:895.0px;top:224.0px;height:1503.6px;background:#7d6079;width:1.35px"></div><div class="gd" style="left:923.1px;top:232.2px;height:1462.9px;background:#383d47;width:1.35px"></div><div class="gd" style="left:951.1px;top:267.9px;height:749.3px;background:#383d47;width:1.35px"></div><div class="gd" style="left:951.1px;top:1088.5px;height:178.4px;background:#383d47;width:1.35px"></div><div class="gd" style="left:951.1px;top:1338.3px;height:321.1px;background:#383d47;width:1.35px"></div><div class="gd" style="left:979.1px;top:303.6px;height:142.7px;background:#383d47;width:1.35px"></div><div class="gd" style="left:979.1px;top:589.0px;height:107.0px;background:#6c6a5a;width:1.35px"></div><div class="gd" style="left:979.1px;top:767.4px;height:35.7px;background:#6c6a5a;width:1.35px"></div><div class="gd" style="left:979.1px;top:874.4px;height:107.0px;background:#6c6a5a;width:1.35px"></div><div class="gd" style="left:979.1px;top:1159.9px;height:71.4px;background:#383d47;width:1.35px"></div><div class="gd" style="left:979.1px;top:1374.0px;height:107.0px;background:#383d47;width:1.35px"></div><div class="gd" style="left:979.1px;top:1552.4px;height:71.4px;background:#383d47;width:1.35px"></div><div class="gd" style="left:979.1px;top:696.0px;height:35.7px;background:#3e7f88;width:1.35px"></div><div class="gd" style="left:979.1px;top:803.1px;height:35.7px;background:#3e7f88;width:1.35px"></div><div class="gd" style="left:979.1px;top:981.5px;height:35.7px;background:#3e7f88;width:1.35px"></div><div class="gd" style="left:1007.2px;top:374.9px;height:35.7px;background:#6c6a5a;width:1.35px"></div><div class="gd" style="left:1007.2px;top:410.6px;height:35.7px;background:#3e7f88;width:1.35px"></div><div class="gd" style="left:1007.2px;top:624.7px;height:35.7px;background:#383d47;width:1.35px"></div><div class="gd" style="left:1007.2px;top:910.1px;height:35.7px;background:#383d47;width:1.35px"></div><div class="ln" style="left:699.6px;top:232.10px">164</div><div class="code" style="left:951.3px;top:232.10px"><span class="f">&lt;</span><span class="r">div</span><span class="f"> </span><span class="o">className</span><span class="c">=</span><span class="c">{</span><span class="y">styles</span><span class="o">[</span><span class="g">'live<span class="h">-</span>view<span class="h">-</span>mask'</span><span class="o">]</span><span class="c">}</span><span class="f"> </span><span class="o">id</span><span class="c">=</span><span class="c">{</span><span class="r">item</span><span class="f">.</span><span class="r">liveId</span><span class="c">}</span><span class="f">&gt;</span></div><div class="ln" style="left:699.6px;top:267.78px">165</div><div class="code" style="left:979.3px;top:267.78px"><span class="f">&lt;</span><span class="r">div</span></div><div class="ln" style="left:699.6px;top:303.46px">166</div><div class="code" style="left:1007.4px;top:303.46px"><span class="o">className</span><span class="c">=</span><span class="c">{</span><span class="y">styles</span><span class="o">[</span><span class="g">'live<span class="h">-</span>view<span class="h">-</span>background'</span><span class="o">]</span><span class="c">}</span></div><div class="ln" style="left:699.6px;top:339.14px">167</div><div class="code" style="left:1007.4px;top:339.14px"><span class="o">style</span><span class="c">=</span><span class="c">{</span><span class="o">{</span></div><div class="ln" style="left:699.6px;top:374.82px">168</div><div class="code" style="left:1035.4px;top:374.82px"><span class="r">backgroundImage</span><span class="f">: </span><span class="g">`url(</span><span class="p">${</span><span class="r">item</span><span class="f">.</span><span class="r">backgroundUrl</span><span class="f"> </span><span class="c">||</span><span class="f"> </span><span class="r">item</span><span class="f">.</span><span class="r">coverUrl</span><span class="f"> </span><span class="c">||</span><span class="f"> </span><span class="y">defaultCoverUrl</span><span class="p">}</span><span class="g">)`</span><span class="f">,</span></div><div class="ln" style="left:699.6px;top:410.50px">169</div><div class="code" style="left:1007.4px;top:410.50px"><span class="o">}</span><span class="c">}</span></div><div class="ln" style="left:699.6px;top:446.18px">170</div><div class="code" style="left:979.3px;top:446.18px"><span class="f">/&gt;</span></div><div class="ln" style="left:699.6px;top:481.86px">171</div><div class="code" style="left:979.3px;top:481.86px"><span class="f">&lt;</span><span class="y">LiveMonitorView</span><span class="f"> </span><span class="o">liveInfo</span><span class="c">=</span><span class="c">{</span><span class="r">item</span><span class="c">}</span><span class="f"> </span><span class="o">onClickCloseLive</span><span class="c">=</span><span class="c">{</span><span class="b">handleCloseLive</span><span class="c">}</span><span class="f"> /&gt;</span></div><div class="ln" style="left:699.6px;top:517.54px">172</div><div class="code" style="left:979.3px;top:517.54px"><span class="f">&lt;</span><span class="r">div</span><span class="f"> </span><span class="o">className</span><span class="c">=</span><span class="c">{</span><span class="y">styles</span><span class="o">[</span><span class="g">'live<span class="h">-</span>id'</span><span class="o">]</span><span class="c">}</span><span class="f">&gt;</span><span class="c">{</span><span class="g">`</span><span class="p">${</span><span class="b">t</span><span class="o">(</span><span class="g">'RoomId'</span><span class="o">)</span><span class="p">}</span><span class="f"> </span><span class="p">${</span><span class="r">item</span><span class="f">.</span><span class="r">liveId</span><span class="p">}</span><span class="g">`</span><span class="c">}</span><span class="f">&lt;/</span><span class="r">div</span><span class="f">&gt;</span></div><div class="ln" style="left:699.6px;top:553.22px">173</div><div class="code" style="left:979.3px;top:553.22px"><span class="c">{</span><span class="c">!</span><span class="y">isFullscreen</span><span class="f"> </span><span class="c">&amp;&amp;</span><span class="f"> </span><span class="o">(</span></div><div class="ln" style="left:699.6px;top:588.90px">174</div><div class="code" style="left:1007.4px;top:588.90px"><span class="f">&lt;</span><span class="r">div</span><span class="f"> </span><span class="o">className</span><span class="c">=</span><span class="p">{</span><span class="y">styles</span><span class="c">[</span><span class="g">'display<span class="h">-</span>details'</span><span class="c">]</span><span class="p">}</span><span class="f"> </span><span class="o">onClick</span><span class="c">=</span><span class="p">{</span><span class="c">()</span><span class="f"> </span><span class="p">=&gt;</span><span class="f"> </span><span class="b">handleClickDetails</span><span class="c">(</span><span class="r">item</span><span class="f">.</span><span class="r">liveId</span><span class="c">)</span><span class="p">}</span><span class="f">&gt;</span></div><div class="ln" style="left:699.6px;top:624.58px">175</div><div class="code" style="left:1035.4px;top:624.58px"><span class="p">{</span><span class="b">t</span><span class="c">(</span><span class="g">'Display details'</span><span class="c">)</span><span class="p">}</span></div><div class="ln" style="left:699.6px;top:660.26px">176</div><div class="code" style="left:1007.4px;top:660.26px"><span class="f">&lt;/</span><span class="r">div</span><span class="f">&gt;</span></div><div class="ln" style="left:699.6px;top:695.94px">177</div><div class="code" style="left:979.3px;top:695.94px"><span class="o">)</span><span class="c">}</span></div><div class="ln" style="left:699.6px;top:731.62px">178</div><div class="code" style="left:979.3px;top:731.62px"><span class="c">{</span><span class="y">isFullscreen</span><span class="f"> </span><span class="c">&amp;&amp;</span><span class="f"> </span><span class="o">(</span></div><div class="ln" style="left:699.6px;top:767.30px">179</div><div class="code" style="left:1007.4px;top:767.30px"><span class="f">&lt;</span><span class="y">IconClose</span><span class="f"> </span><span class="o">className</span><span class="c">=</span><span class="p">{</span><span class="y">styles</span><span class="c">[</span><span class="g">'close<span class="h">-</span>fullscreen'</span><span class="c">]</span><span class="p">}</span><span class="f"> </span><span class="o">size</span><span class="c">=</span><span class="g">'32'</span><span class="f"> </span><span class="o">onClick</span><span class="c">=</span><span class="p">{</span><span class="b">handleCloseFullscreen</span><span class="p">}</span><span class="f"> /&gt;</span></div><div class="ln" style="left:699.6px;top:802.98px">180</div><div class="code" style="left:979.3px;top:802.98px"><span class="o">)</span><span class="c">}</span></div><div class="ln" style="left:699.6px;top:838.66px">181</div><div class="code" style="left:979.3px;top:838.66px"><span class="c">{</span><span class="y">isFullscreen</span><span class="f"> </span><span class="c">&amp;&amp;</span><span class="f"> </span><span class="o">(</span></div><div class="ln" style="left:699.6px;top:874.34px">182</div><div class="code" style="left:1007.4px;top:874.34px"><span class="f">&lt;</span><span class="r">div</span><span class="f"> </span><span class="o">className</span><span class="c">=</span><span class="p">{</span><span class="y">styles</span><span class="c">[</span><span class="g">'toggle<span class="h">-</span>audio<span class="h">-</span>button'</span><span class="c">]</span><span class="p">}</span><span class="f"> </span><span class="o">onClick</span><span class="c">=</span><span class="p">{</span><span class="c">()</span><span class="f"> </span><span class="p">=&gt;</span><span class="f"> </span><span class="b">toggleMuteAudio</span><span class="c">(</span><span class="r">item</span><span class="f">.</span><span class="r">liveId</span><span class="c">)</span><span class="p">}</span><span class="f">&gt;</span></div><div class="ln" style="left:699.6px;top:910.02px">183</div><div class="code" style="left:1035.4px;top:910.02px"><span class="p">{</span><span class="y">isMuted</span><span class="f"> </span><span class="p">?</span><span class="f"> &lt;</span><span class="y">IconSpeakerOff</span><span class="f"> </span><span class="o">size</span><span class="c">=</span><span class="g">'32'</span><span class="f"> /&gt; </span><span class="p">:</span><span class="f"> &lt;</span><span class="y">IconSpeakerOn</span><span class="f"> </span><span class="o">size</span><span class="c">=</span><span class="g">'32'</span><span class="f"> /&gt;</span><span class="p">}</span></div><div class="ln" style="left:699.6px;top:945.70px">184</div><div class="code" style="left:1007.4px;top:945.70px"><span class="f">&lt;/</span><span class="r">div</span><span class="f">&gt;</span></div><div class="ln" style="left:699.6px;top:981.38px">185</div><div class="code" style="left:979.3px;top:981.38px"><span class="o">)</span><span class="c">}</span></div><div class="ln" style="left:699.6px;top:1017.06px">186</div><div class="code" style="left:951.3px;top:1017.06px"><span class="f">&lt;/</span><span class="r">div</span><span class="f">&gt;</span></div><div class="ln" style="left:699.6px;top:1052.74px">187</div><div class="code" style="left:951.3px;top:1052.74px"><span class="f">&lt;</span><span class="r">div</span><span class="f"> </span><span class="o">className</span><span class="c">=</span><span class="c">{</span><span class="y">styles</span><span class="o">[</span><span class="g">'live<span class="h">-</span>info'</span><span class="o">]</span><span class="c">}</span><span class="f">&gt;</span></div><div class="ln" style="left:699.6px;top:1088.42px">188</div><div class="code" style="left:979.3px;top:1088.42px"><span class="f">&lt;</span><span class="r">div</span><span class="f"> </span><span class="o">className</span><span class="c">=</span><span class="c">{</span><span class="y">styles</span><span class="o">[</span><span class="g">'live<span class="h">-</span>name'</span><span class="o">]</span><span class="c">}</span><span class="f">&gt;</span><span class="c">{</span><span class="r">item</span><span class="f">.</span><span class="r">liveName</span><span class="c">}</span><span class="f">&lt;/</span><span class="r">div</span><span class="f">&gt;</span></div><div class="ln" style="left:699.6px;top:1124.10px">189</div><div class="code" style="left:979.3px;top:1124.10px"><span class="f">&lt;</span><span class="r">div</span><span class="f"> </span><span class="o">className</span><span class="c">=</span><span class="c">{</span><span class="y">styles</span><span class="o">[</span><span class="g">'live<span class="h">-</span>owner'</span><span class="o">]</span><span class="c">}</span><span class="f">&gt;</span></div><div class="ln" style="left:699.6px;top:1159.78px">190</div><div class="code" style="left:1007.4px;top:1159.78px"><span class="f">&lt;</span><span class="y">Avatar</span><span class="f"> </span><span class="o">size</span><span class="c">=</span><span class="c">{</span><span class="o">20</span><span class="c">}</span><span class="f"> </span><span class="o">src</span><span class="c">=</span><span class="c">{</span><span class="r">item</span><span class="f">.</span><span class="r">avatarUrl</span><span class="f"> </span><span class="c">||</span><span class="f"> </span><span class="y">defaultAvatarUrl</span><span class="c">}</span><span class="f"> /&gt;</span></div><div class="ln" style="left:699.6px;top:1195.46px">191</div><div class="code" style="left:1007.4px;top:1195.46px"><span class="f">&lt;</span><span class="r">span</span><span class="f"> </span><span class="o">className</span><span class="c">=</span><span class="c">{</span><span class="y">styles</span><span class="o">[</span><span class="g">'live<span class="h">-</span>owner<span class="h">-</span>name'</span><span class="o">]</span><span class="c">}</span><span class="f">&gt;</span><span class="c">{</span><span class="r">item</span><span class="f">.</span><span class="r">liveOwner</span><span class="c">}</span><span class="f">&lt;/</span><span class="r">span</span><span class="f">&gt;</span></div><div class="ln" style="left:699.6px;top:1231.14px">192</div><div class="code" style="left:979.3px;top:1231.14px"><span class="f">&lt;/</span><span class="r">div</span><span class="f">&gt;</span></div><div class="ln" style="left:699.6px;top:1266.82px">193</div><div class="code" style="left:951.3px;top:1266.82px"><span class="f">&lt;/</span><span class="r">div</span><span class="f">&gt;</span></div><div class="ln" style="left:699.6px;top:1302.50px">194</div><div class="code" style="left:951.3px;top:1302.50px"><span class="f">&lt;</span><span class="r">div</span><span class="f"> </span><span class="o">className</span><span class="c">=</span><span class="c">{</span><span class="y">styles</span><span class="o">[</span><span class="g">'operate<span class="h">-</span>button'</span><span class="o">]</span><span class="c">}</span><span class="f">&gt;</span></div><div class="ln" style="left:699.6px;top:1338.18px">195</div><div class="code" style="left:979.3px;top:1338.18px"><span class="f">&lt;</span><span class="r">div</span><span class="f"> </span><span class="o">className</span><span class="c">=</span><span class="c">{</span><span class="g">`</span><span class="p">${</span><span class="y">styles</span><span class="o">[</span><span class="g">'warn<span class="h">-</span>button'</span><span class="o">]</span><span class="p">}</span><span class="f"> </span><span class="p">${</span><span class="y">styles</span><span class="f">.</span><span class="r">button</span><span class="p">}</span><span class="g">`</span><span class="c">}</span><span class="f">&gt;</span></div><div class="ln" style="left:699.6px;top:1373.86px">196</div><div class="code" style="left:1007.4px;top:1373.86px"><span class="f">&lt;</span><span class="y">IconNotification</span><span class="f"> /&gt;</span></div><div class="ln" style="left:699.6px;top:1409.54px">197</div><div class="code" style="left:1007.4px;top:1409.54px"><span class="f">&lt;</span><span class="r">span</span><span class="f"> </span><span class="o">className</span><span class="c">=</span><span class="c">{</span><span class="y">styles</span><span class="o">[</span><span class="g">'button<span class="h">-</span>text'</span><span class="o">]</span><span class="c">}</span><span class="f">&gt;</span><span class="c">{</span><span class="b">t</span><span class="o">(</span><span class="g">'Warning'</span><span class="o">)</span><span class="c">}</span><span class="f">&lt;/</span><span class="r">span</span><span class="f">&gt;</span></div><div class="ln" style="left:699.6px;top:1445.22px">198</div><div class="code" style="left:1007.4px;top:1445.22px"><span class="f">&lt;</span><span class="y">IconChevronDown</span><span class="f"> /&gt;</span></div><div class="ln" style="left:699.6px;top:1480.90px">199</div><div class="code" style="left:979.3px;top:1480.90px"><span class="f">&lt;/</span><span class="r">div</span><span class="f">&gt;</span></div><div class="ln" style="left:699.6px;top:1516.58px">200</div><div class="code" style="left:979.3px;top:1516.58px"><span class="f">&lt;</span><span class="r">div</span><span class="f"> </span><span class="o">className</span><span class="c">=</span><span class="c">{</span><span class="g">`</span><span class="p">${</span><span class="y">styles</span><span class="o">[</span><span class="g">'close<span class="h">-</span>button'</span><span class="o">]</span><span class="p">}</span><span class="f"> </span><span class="p">${</span><span class="y">styles</span><span class="f">.</span><span class="r">button</span><span class="p">}</span><span class="g">`</span><span class="c">}</span><span class="f"> </span><span class="o">onClick</span><span class="c">=</span><span class="c">{</span><span class="o">()</span><span class="f"> </span><span class="p">=&gt;</span><span class="f"> </span><span class="b">handleCloseLive</span><span class="o">(</span><span class="r">item</span><span class="f">.</span><span class="r">liveId</span><span class="o">)</span><span class="c">}</span><span class="f">&gt;</span></div><div class="ln" style="left:699.6px;top:1552.26px">201</div><div class="code" style="left:1007.4px;top:1552.26px"><span class="f">&lt;</span><span class="y">IconStopCircle</span><span class="f"> /&gt;</span></div><div class="ln" style="left:699.6px;top:1587.94px">202</div><div class="code" style="left:1007.4px;top:1587.94px"><span class="f">&lt;</span><span class="r">span</span><span class="f"> </span><span class="o">className</span><span class="c">=</span><span class="c">{</span><span class="y">styles</span><span class="o">[</span><span class="g">'button<span class="h">-</span>text'</span><span class="o">]</span><span class="c">}</span><span class="f">&gt;</span><span class="c">{</span><span class="b">t</span><span class="o">(</span><span class="g">'Force Close'</span><span class="o">)</span><span class="c">}</span><span class="f">&lt;/</span><span class="r">span</span><span class="f">&gt;</span></div><div class="ln" style="left:699.6px;top:1623.62px">203</div><div class="code" style="left:979.3px;top:1623.62px"><span class="f">&lt;/</span><span class="r">div</span><span class="f">&gt;</span></div><div class="ln" style="left:699.6px;top:1659.30px">204</div><div class="code" style="left:951.3px;top:1659.30px"><span class="f">&lt;/</span><span class="r">div</span><span class="f">&gt;</span></div><div class="ln" style="left:699.6px;top:1694.98px">205</div><div class="code" style="left:923.3px;top:1694.98px"><span class="f">&lt;/</span><span class="r">div</span><span class="f">&gt;</span></div><div class="pill" style="left:978.8px;top:762.0px;width:1374.0px;height:47.0px"><i style="background:#30343d"></i></div><div class="pill" style="left:1600.4px;top:903.0px;width:444.6px;height:47.0px"><i style="background:#30343d"></i></div><div class="pill" style="left:978.4px;top:1368.8px;width:347.6px;height:47.0px"><i style="background:#42454c"></i></div><div class="pill" style="left:978.4px;top:1441.8px;width:347.6px;height:46.8px"><i style="background:#363943"></i></div><div class="pill" style="left:978.4px;top:1548.2px;width:318.2px;height:47.6px"><i style="background:#383b44"></i></div><div class="code" style="left:1007.4px;top:767.30px"><span class="f">&lt;</span><span class="y">IconClose</span><span class="f"> </span><span class="o">className</span><span class="c">=</span><span class="p">{</span><span class="y">styles</span><span class="c">[</span><span class="g">'close<span class="h">-</span>fullscreen'</span><span class="c">]</span><span class="p">}</span><span class="f"> </span><span class="o">size</span><span class="c">=</span><span class="g">'32'</span><span class="f"> </span><span class="o">onClick</span><span class="c">=</span><span class="p">{</span><span class="b">handleCloseFullscreen</span><span class="p">}</span><span class="f"> /&gt;</span></div><div class="code" style="left:1007.4px;top:1373.86px"><span class="f">&lt;</span><span class="y">IconNotification</span><span class="f"> /&gt;</span></div><div class="code" style="left:1007.4px;top:1445.22px"><span class="f">&lt;</span><span class="y">IconChevronDown</span><span class="f"> /&gt;</span></div><div class="code" style="left:1007.4px;top:1552.26px"><span class="f">&lt;</span><span class="y">IconStopCircle</span><span class="f"> /&gt;</span></div><div class="code" style="left:1624.2px;top:910.02px"><span class="f">&lt;</span><span class="y">IconSpeakerOn</span><span class="f"> </span><span class="o">size</span><span class="c">=</span><span class="g">'32'</span><span class="f"> /&gt;</span><span class="p">}</span></div><div style="left:692.0px;top:153.0px;width:1957.0px;height:71.4px;background:#23262e;"></div><div style="left:692px;top:224.4px;width:1957px;height:6px;background:linear-gradient(180deg,rgba(0,0,0,.13),rgba(0,0,0,0))"></div><div class="ln" style="left:699.6px;top:152.90px">65</div><div class="code" style="left:811.1px;top:152.90px"><span class="p">const</span><span class="f"> </span><span class="b">LiveList</span><span class="f">: </span><span class="y">React</span><span class="f">.</span><span class="y">FC</span><span class="f">&lt;</span><span class="y">LiveListProps</span><span class="f">&gt; </span><span class="c">=</span><span class="f"> </span><span class="o">(</span><span class="p">{</span><span class="f"> </span><span class="r">monitorLiveInfoList</span><span class="f"> </span><span class="p">}</span><span class="o">)</span><span class="f"> </span><span class="p">=&gt;</span><span class="f"> </span><span class="o">{</span></div><div class="ln" style="left:699.6px;top:187.60px">162</div><div class="code" style="left:895.2px;top:187.60px"><span class="c">{</span><span class="r">monitorLiveInfoList</span><span class="f">.</span><span class="b">map</span><span class="o">(</span><span class="r">item</span><span class="f"> </span><span class="p">=&gt;</span><span class="f"> </span><span class="p">(</span></div><div style="left:2644.4px;top:1144.6px;width:4.6px;height:272.4px;background:#353a45;"></div><div style="left:2644.4px;top:1108.4px;width:4.6px;height:2.2px;background:#4d78cc;"></div><svg style="left:1394.0px;top:398.0px" width="17.4" height="34.4" viewBox="0 0 17.4 34.4" overflow="visible"><path d="M2.6 3Q7 3.2 8.7 5.7Q10.4 3.2 14.8 3M8.7 5.7V28.7M2.6 31.4Q7 31.2 8.7 28.7Q10.4 31.2 14.8 31.4M6.6 18.2H10.8" fill="none" stroke="#fff" stroke-width="6" stroke-linecap="round" stroke-linejoin="round"/><path d="M2.6 3Q7 3.2 8.7 5.7Q10.4 3.2 14.8 3M8.7 5.7V28.7M2.6 31.4Q7 31.2 8.7 28.7Q10.4 31.2 14.8 31.4M6.6 18.2H10.8" fill="none" stroke="#000" stroke-width="1.7" stroke-linecap="round"/></svg><div style="left:106.0px;top:1727.6px;width:2543.0px;height:34.4px;background:#1e2127;"></div><div style="left:106px;top:1727.6px;width:52.8px;height:34px;background:#4d78cc;border-bottom-left-radius:15px"></div><div style="left:106.0px;top:1750.0px;width:6.0px;height:12.0px;background:#15171b;"></div><div style="left:106px;top:1727.6px;width:52.8px;height:33.2px;background:#4d78cc;border-bottom-left-radius:15px"></div><svg style="left:123.6px;top:1734.6px" width="18" height="18" viewBox="0 0 18 18" ><path d="M1.6 7.4L7 12.6L1.6 17.4M16.2 1L10.8 5.8L16.2 11" fill="none" stroke="#e8edf7" stroke-width="1.6"/></svg><svg style="left:171.6px;top:1738.4px" width="21" height="12" viewBox="0 0 21 12" ><path d="M10.4 6C8.4 2.6 6.6 1.2 4.8 1.2C2.6 1.2 1 3.2 1 6C1 8.8 2.6 10.8 4.8 10.8C6.6 10.8 8.4 9.4 10.4 6C12.4 2.6 14.2 1.2 16 1.2C18.2 1.2 19.8 3.2 19.8 6C19.8 8.8 18.2 10.8 16 10.8C14.2 10.8 12.4 9.4 10.4 6Z" fill="none" stroke="#9da5b4" stroke-width="1.6"/></svg><div class="st" style="left:199.4px;letter-spacing:-0.490px;">Agents</div><svg style="left:282.6px;top:1733.6px" width="15" height="22" viewBox="0 0 15 22" ><circle cx="3.6" cy="3.6" r="2.5" fill="none" stroke="#9da5b4" stroke-width="1.5"/><circle cx="3.6" cy="18" r="2.5" fill="none" stroke="#9da5b4" stroke-width="1.5"/><circle cx="11.6" cy="6.8" r="2.5" fill="none" stroke="#9da5b4" stroke-width="1.5"/><path d="M3.6 6.2V15.4M11.6 9.4Q11.6 12 8.4 12.2Q3.6 12.4 3.6 15.4" fill="none" stroke="#9da5b4" stroke-width="1.5"/></svg><div class="st" style="left:307.8px;letter-spacing:0.218px;">mutilresolution*</div><svg style="left:457.4px;top:1735.6px" width="20" height="17" viewBox="0 0 20 17" ><path d="M5.6 12.6H4.8A3.8 3.8 0 0 1 4.6 5A5.4 5.4 0 0 1 15 4.8A3.9 3.9 0 0 1 15.2 12.6H14.2" fill="none" stroke="#9da5b4" stroke-width="1.5"/><path d="M10 16V8M6.8 10.6L10 7.4L13.2 10.6" fill="none" stroke="#9da5b4" stroke-width="1.5"/></svg><svg style="left:500.6px;top:1734.6px" width="20" height="20" viewBox="0 0 20 20" ><circle cx="10" cy="10" r="8.8" fill="none" stroke="#9da5b4" stroke-width="1.5"/><path d="M6.4 6.4L13.6 13.6M13.6 6.4L6.4 13.6" stroke="#9da5b4" stroke-width="1.5"/></svg><div class="st" style="left:525.6px;letter-spacing:0.000px;">7</div><svg style="left:544.4px;top:1734.8px" width="20" height="19" viewBox="0 0 20 19" ><path d="M10 1.6L18.8 17.6H1.2Z" fill="none" stroke="#9da5b4" stroke-width="1.5" stroke-linejoin="round"/><path d="M10 7V12.4M10 14V15.8" stroke="#9da5b4" stroke-width="1.5"/></svg><div class="st" style="left:571.0px;letter-spacing:0.000px;">0</div><svg style="left:588.6px;top:1734.6px" width="20" height="20" viewBox="0 0 20 20" ><circle cx="10" cy="10" r="8.8" fill="none" stroke="#9da5b4" stroke-width="1.5"/><path d="M10 8.6V14.6M10 5.6V7.2" stroke="#9da5b4" stroke-width="1.6"/></svg><div class="st" style="left:615.0px;letter-spacing:0.000px;">3</div><div class="st" style="left:651.8px;letter-spacing:0.213px;">[TypeScript Importer]: Symbols: 4380</div><div class="st" style="left:1009.3px;letter-spacing:-0.174px;">Git Graph</div><div class="st" style="left:1956.0px;letter-spacing:-0.070px;">Cursor Tab</div><svg style="left:2081.4px;top:1732.8px" width="13" height="24" viewBox="0 0 13 24" ><circle cx="6.5" cy="12" r="4.2" fill="none" stroke="#9da5b4" stroke-width="1.6"/><path d="M6.5 1.4V7.8M6.5 16.2V22.6" stroke="#9da5b4" stroke-width="1.6"/></svg><div class="st" style="left:2103.5px;letter-spacing:0.105px;">icebergfeng (4 天前)</div><div style="left:2295.6px;top:1727.6px;width:51.8px;height:34.4px;background:#121316;"></div><svg style="left:2311.6px;top:1734.4px" width="20" height="20" viewBox="0 0 20 20" ><circle cx="8" cy="8" r="6.8" fill="none" stroke="#9da5b4" stroke-width="1.5"/><path d="M12.8 12.8L19 19M4.8 8H11.2" stroke="#9da5b4" stroke-width="1.5"/></svg><div class="st" style="left:2360.4px;letter-spacing:-0.044px;">行 156，列 13</div><div class="st" style="left:2509.4px;letter-spacing:-0.179px;">空格: 2</div><div class="st" style="left:2594.0px;letter-spacing:0.294px;">UTF-8</div></div>
</body></html>
